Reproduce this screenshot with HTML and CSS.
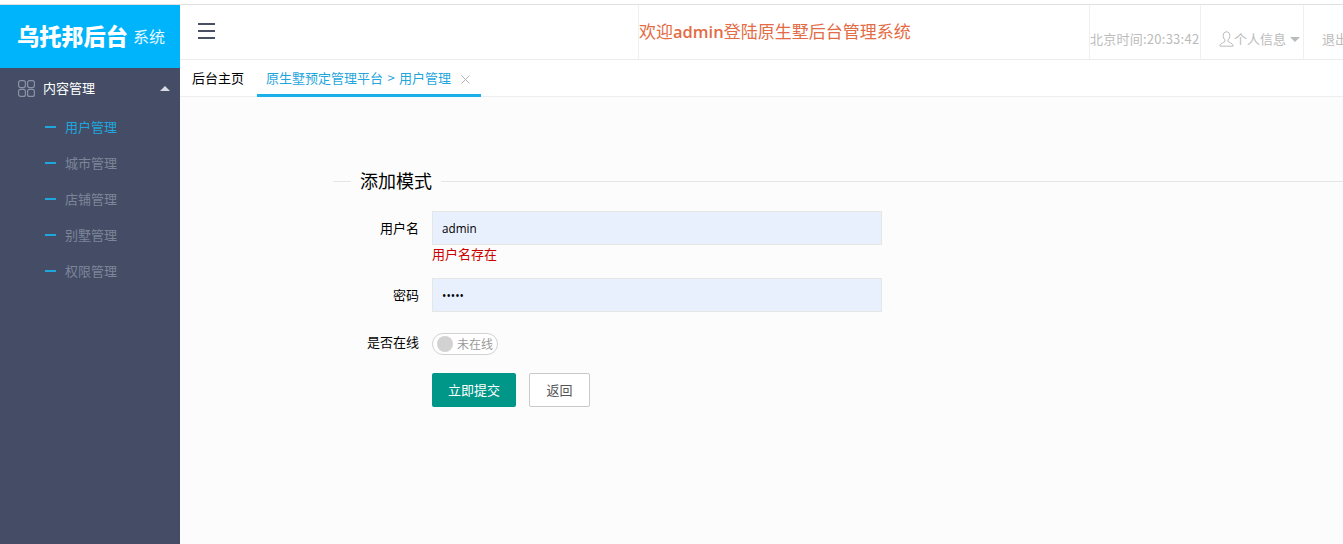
FILE: index.html
```html
<!DOCTYPE html>
<html lang="zh">
<head>
<meta charset="utf-8">
<title>后台管理</title>
<link rel="stylesheet" href="styles.css">
</head>
<body>
<div class="app">
  <aside class="sidebar">
    <div class="logo"><span class="logo-main">乌托邦后台</span><span class="logo-sub">系统</span></div>
    <div class="menu-parent">
      <svg class="menu-icon" width="17" height="17" viewBox="0 0 17 17" fill="none" stroke="#8b92a5" stroke-width="1.2"><rect x="0.6" y="0.6" width="6.8" height="7" rx="2"/><rect x="9.6" y="0.6" width="6.8" height="7" rx="2"/><rect x="0.6" y="9.4" width="6.8" height="7" rx="2"/><rect x="9.6" y="9.4" width="6.8" height="7" rx="2"/></svg>
      <span class="menu-title">内容管理</span>
      <span class="arrow-up"></span>
    </div>
    <ul class="menu-list">
      <li class="menu-item active"><i class="dash"></i>用户管理</li>
      <li class="menu-item"><i class="dash"></i>城市管理</li>
      <li class="menu-item"><i class="dash"></i>店铺管理</li>
      <li class="menu-item"><i class="dash"></i>别墅管理</li>
      <li class="menu-item"><i class="dash"></i>权限管理</li>
    </ul>
  </aside>
  <main class="main">
    <header class="topbar">
      <div class="cell-burger">
        <svg width="17" height="16" viewBox="0 0 17 16" fill="#4a5064"><rect y="0" width="17" height="2"/><rect y="7" width="17" height="2"/><rect y="14" width="17" height="2"/></svg>
      </div>
      <div class="cell-welcome">欢迎<b>admin</b>登陆原生墅后台管理系统</div>
      <div class="cell cell-time">北京时间:20:33:42</div>
      <div class="cell cell-user">
        <svg width="15" height="16" viewBox="0 0 15 16" fill="none" stroke="#bbb" stroke-width="1"><path d="M7.5 0.8c-2.2 0-3.3 1.6-3.3 3.7 0 1.9 0.8 3.4 1.7 4.3v1.7c-1.2 1-3.8 1.6-4.9 3.4v1.3h13v-1.3c-1.1-1.8-3.7-2.4-4.9-3.4v-1.7c0.9-0.9 1.7-2.4 1.7-4.3 0-2.1-1.1-3.7-3.3-3.7z"/></svg>
        <span>个人信息</span><i class="caret"></i>
      </div>
      <div class="cell cell-exit">退出</div>
    </header>
    <nav class="tabs">
      <span class="tab">后台主页</span>
      <span class="tab tab-active">原生墅预定管理平台 &gt; 用户管理<svg class="tab-close" width="9" height="9" viewBox="0 0 9 9" stroke="#aaa" stroke-width="0.9" fill="none"><path d="M0.5 0.5l8 8M8.5 0.5l-8 8"/></svg></span>
    </nav>
    <section class="content">
      <fieldset class="panel">
        <legend class="panel-title">添加模式</legend>
        <form class="form">
          <div class="row row-first">
            <label class="label">用户名</label>
            <div class="field"><input class="input" type="text" value="admin"></div>
          </div>
          <div class="error">用户名存在</div>
          <div class="row row-pass">
            <label class="label">密码</label>
            <div class="field"><input class="input input-pass" type="password" value="admin"></div>
          </div>
          <div class="row row-switch">
            <label class="label label-switch">是否在线</label>
            <div class="switch"><i class="knob"></i><span class="switch-text">未在线</span></div>
          </div>
          <div class="actions">
            <button class="btn btn-primary" type="button">立即提交</button>
            <button class="btn btn-plain" type="button">返回</button>
          </div>
        </form>
      </fieldset>
    </section>
  </main>
</div>
</body>
</html>
```

FILE: styles.css
```css
* { box-sizing: border-box; }
html, body { margin: 0; height: 100%; overflow: hidden; }
body {
  font-family: "Noto Sans CJK SC", "Liberation Sans", sans-serif;
  font-size: 13px;
  background: #fff;
  color: #000;
}
.app {
  display: flex;
  height: 544px;
  margin-top: 4px;
  border-top: 1px solid #e0e0e0;
}
.sidebar {
  width: 180px;
  flex: none;
  background: #444d65;
  margin-bottom: -5px;
}
.logo {
  height: 63px;
  background: #00b4fb;
  color: #fff;
  display: flex;
  align-items: center;
  padding: 0 0 4px 17px;
  white-space: nowrap;
}
.logo-main { font-size: 22.2px; font-weight: 900; }
.logo-sub { font-size: 16px; margin-left: 5px; margin-top: 3px; color: #e6f7ff; }
.menu-parent {
  height: 40px;
  display: flex;
  align-items: center;
  padding: 0 0 0 18px;
  color: #fff;
}
.menu-icon { margin-top: 1px; }
.menu-title { margin: 0 0 2px 8px; }
.arrow-up {
  width: 0;
  height: 0;
  border-left: 5.5px solid transparent;
  border-right: 5.5px solid transparent;
  border-bottom: 5.5px solid #d8dbe2;
  margin-left: 65px;
}
.menu-list { list-style: none; margin: 0; padding: 0; }
.menu-item {
  height: 36px;
  display: flex;
  align-items: center;
  padding-left: 45px;
  color: #7d8599;
}
.menu-item.active { color: #1fa6dd; }
.dash {
  width: 11px;
  height: 2px;
  background: #1fa6dd;
  margin: 2px 9px 0 0;
}
.main { flex: 1; min-width: 0; display: flex; flex-direction: column; }
.topbar {
  height: 55px;
  flex: none;
  display: flex;
  border-bottom: 1px solid #ececec;
  background: #fff;
}
.cell-burger {
  width: 458px;
  flex: none;
  padding: 18px 0 0 18px;
}
.cell-welcome {
  width: 451px;
  flex: none;
  border-left: 1px solid #f0f0f0;
  color: #e36b45;
  font-size: 17px;
  line-height: 24px;
  padding: 14px 0 0 0;
  white-space: nowrap;
}
.cell-welcome b { font-family: "Open Sans", sans-serif; font-weight: 600; font-size: 16.5px; }
.cell {
  flex: none;
  border-left: 1px solid #f0f0f0;
  color: #bbb;
  white-space: nowrap;
  padding-top: 24px;
  line-height: 20px;
}
.cell-time { width: 111px; letter-spacing: 0.25px; }
.cell-user { width: 103px; padding-left: 18px; display: flex; align-items: flex-start; }
.cell-user svg { margin-top: 2px; }
.caret {
  width: 0;
  height: 0;
  margin: 8px 0 0 4px;
  border-left: 5px solid transparent;
  border-right: 5px solid transparent;
  border-top: 5px solid #bbb;
}
.cell-exit { padding-left: 18px; flex: 1; }
.tabs {
  height: 37px;
  flex: none;
  display: flex;
  border-bottom: 1px solid #eee;
  background: #fff;
  padding-left: 12px;
  align-items: stretch;
}
.tab {
  line-height: 35px;
  white-space: nowrap;
  margin-right: 13px;
}
.tab-active {
  color: #1fa6dd;
  width: 224px;
  padding-left: 9px;
  height: 37px;
  border-bottom: 3px solid #1cb0ea;
  word-spacing: 1.5px;
}
.tab-close { margin-left: 10px; vertical-align: -1px; }
.content {
  flex: 1;
  background: #fcfcfc;
  padding: 72px 0 0 153px;
}
.panel {
  margin: 0;
  padding: 0;
  border: 0;
  border-top: 1px solid #e6e6e6;
  min-width: 0;
}
.panel-title {
  margin-left: 18px;
  padding: 0 9px 2px;
  font-size: 18px;
  line-height: 22px;
}
.form { padding-top: 18px; }
.row { display: flex; align-items: center; }
.label {
  width: 86px;
  margin: 0 13px 2px 0;
  text-align: right;
  white-space: nowrap;
}
.label-switch { margin-bottom: 0; line-height: 18px; }
.field { width: 450px; }
.input {
  display: block;
  width: 100%;
  height: 34px;
  border: 1px solid #e6e6e6;
  background: #e8f0fe;
  padding: 0 9px;
  font-family: "Open Sans", sans-serif;
  font-size: 11.7px;
  color: #000;
  outline: none;
}
.input-pass { letter-spacing: 0; }
.error {
  margin-left: 99px;
  color: #c00;
  line-height: 18px;
  height: 33px;
}
.row-switch { margin-top: 21px; align-items: flex-start; }
.switch {
  width: 66px;
  height: 22px;
  border: 1px solid #d2d2d2;
  border-radius: 20px;
  display: flex;
  align-items: center;
  padding-left: 4px;
  color: #999;
  font-size: 12px;
  background: #fff;
}
.switch-text { margin-bottom: 2px; }
.knob {
  width: 16px;
  height: 16px;
  border-radius: 50%;
  background: #d2d2d2;
  margin-right: 4px;
}
.actions { margin: 18px 0 0 99px; display: flex; gap: 13px; }
.btn {
  height: 34px;
  font-family: inherit;
  font-size: 13px;
  border-radius: 2px;
  padding: 0 0 2px;
}
.btn-primary { width: 84px; background: #009688; color: #fff; border: 0; }
.btn-plain { width: 61px; background: #fff; color: #555; border: 1px solid #c9c9c9; }
```
